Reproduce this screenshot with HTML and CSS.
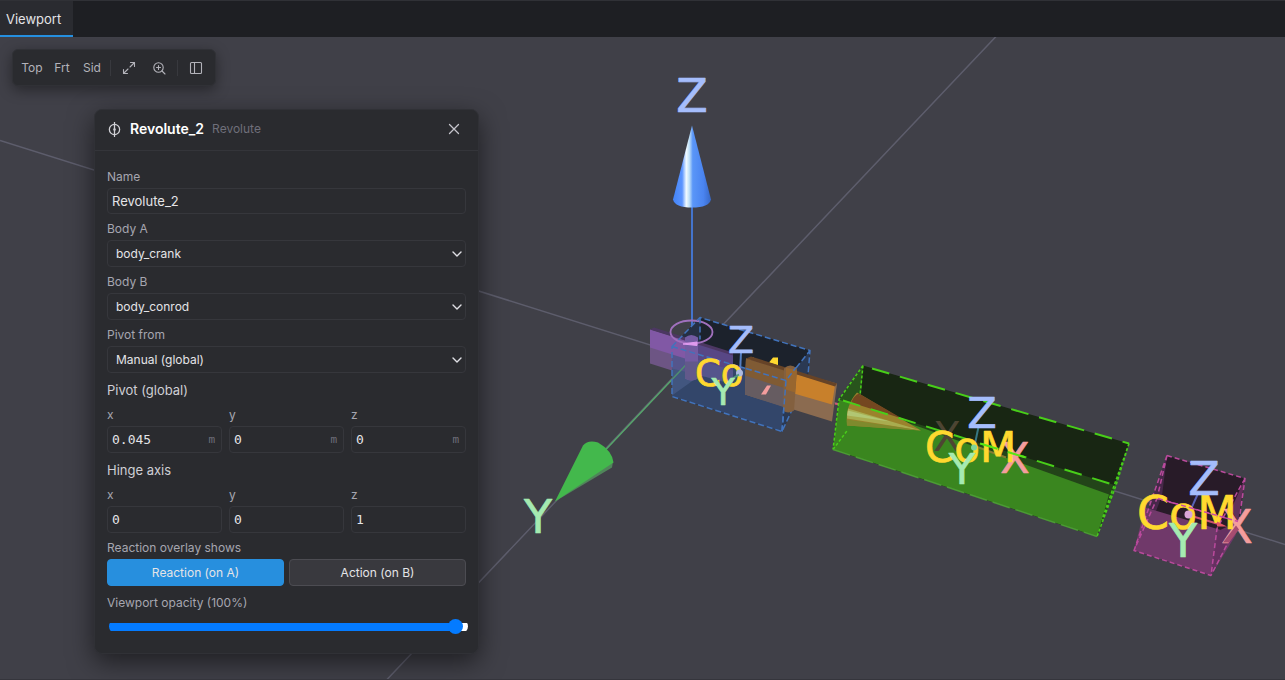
FILE: index.html
```html
<!DOCTYPE html>
<html lang="en">
<head>
<meta charset="utf-8">
<title>Viewport</title>
<link rel="stylesheet" href="styles.css">
</head>
<body>
<nav class="tabs"><button class="tab" type="button">Viewport</button></nav>
<main class="viewport">
  <svg class="scene" viewBox="0 37 1285 643" preserveAspectRatio="xMidYMid slice" role="img" aria-label="3D scene">
    <defs>
      <linearGradient id="coneBlue" x1="0" x2="1" y1="0" y2="0">
        <stop offset="0" stop-color="#4384f8"/><stop offset=".24" stop-color="#5a94ff"/><stop offset=".35" stop-color="#f2fbff"/><stop offset=".43" stop-color="#bfe0f8"/><stop offset=".52" stop-color="#5a96f8"/><stop offset=".8" stop-color="#4a84f0"/><stop offset="1" stop-color="#3767c4"/>
      </linearGradient>
    </defs>
    <!-- ground axes -->
    <g class="grid"><path d="M0 141L1285 545M996 37L387 680"/></g>
    <path d="M692 352V205" stroke="#4474cc" stroke-width="2"/>
    <path d="M691 360L604 452" stroke="#56a56b" stroke-width="1.500"/>
    <path d="M692 126L711 200Q709 208 692 208Q675 208 673 200Z" fill="url(#coneBlue)"/>
    <path d="M555 502L612 468L613 462L600 458Z" fill="#50855a"/>
    <path d="M555 502L583 446Q588 440 598 443Q612 451 613.500 463Z" fill="#43b84c"/>

    <!-- crank -->
    <path d="M700 318L810 351L808 376L782 432L672 397V347Z" fill="#1c222c"/>
    <path d="M672 347L700 318V354Z" fill="#253044"/>
    <path d="M786 381L810 351L807 381L782 432Z" fill="#2b3953"/>
    <path d="M672 347L786 381L782 432L672 397Z" fill="#33466a"/>
    <path d="M672 350L733 368V385L700 376L672 396Z" fill="#42567f"/>
    <path d="M650 330L733 355V370L672 352V371L650 364Z" fill="#6d5584"/>
    <path d="M672 352L733 370V384L672 369Z" fill="#55558c"/>
    <path d="M650 330L685 341V359L650 348Z" fill="#8158a5"/>
    <path d="M697 344L733 355V371L697 360Z" fill="#584785"/>
    <path d="M650 330L654 328L733 353V356Z" fill="#4c3762"/>
    <path d="M691 360L672 380" stroke="#4f8f70" stroke-width="1.500"/>
    <path d="M685 338Q691 333 698 338V379Q691 383 685 379Z" fill="#735ba2"/>
    <path d="M685 362H698V379Q691 383 685 379Z" fill="#62598b"/>
    <ellipse cx="691.500" cy="332.500" rx="21" ry="11.500" fill="none" stroke="#a070bd" stroke-width="1.800"/>
    <path d="M683 344.500L697 342.500V346Z" fill="#df9aef" stroke="#df9aef"/>
    <g class="edge blue"><path d="M672 347L700 318L810 351L808 376L782 432L672 397ZM672 347L786 381L810 351M786 381L782 432M700 318V340"/></g>
    <path d="M741 353L740 373" stroke="#547ec2" stroke-width="2"/>
    <text class="com" x="695" y="386" font-size="37">Co</text>
    <path d="M747 360L754 358V361ZM769 363L773 358H778V366Z" fill="#ffd92f"/>
    <circle cx="739.500" cy="373.500" r="3.500" fill="#aebbe0"/>
    <path d="M731 380L739 375" stroke="#4f987f" stroke-width="2"/>

    <!-- connecting-rod joint -->
    <path d="M746 359L837 384L832 422L745 395Z" fill="#8b6b50"/>
    <path d="M746 359L785 371V408L745 395Z" fill="#665c61"/>
    <path d="M746 359L786 371V389L745 376Z" fill="#805b34"/>
    <path d="M794 374L835 386L832 405L794 394Z" fill="#c8802b"/>
    <path d="M746 359L751 357L837 384L835 387Z" fill="#664327"/>
    <path d="M784 369Q790 363 797 369L794 411Q788 415 783 411Z" fill="#83603f"/>
    <path d="M786 368L797 371L795 393L786 390Z" fill="#98662f"/>
    <path d="M761 395L767 386H771L766 395Z" fill="#f49d9d"/>
    <path d="M835 404L840 405" stroke="#d45778" stroke-width="2"/>
    <g class="edge blue"><path d="M746 369L786 381L796 368M786 381L782 432"/></g>

    <!-- conrod -->
    <path d="M863 366L1129 444L1097 537L833 450L839 400Z" fill="#182613"/>
    <path d="M839 400L863 366L860 412L833 450Z" fill="#28541c"/>
    <path d="M839 400L1116 486L1097 537L833 450Z" fill="#234419"/>
    <path d="M839 400L924 429L1109 495L1097 537L833 450Z" fill="#3a861f"/>
    <path d="M1116 486L1129 444L1097 537Z" fill="#276d20"/>
    <path d="M857 393L921 431L847 426Q845 406 857 393Z" fill="#9b822c"/>
    <path d="M859 394L902 419L851 403Q854 396 859 394Z" fill="#744720"/>
    <path d="M848 409L921 431L847 419Z" fill="#a8ac4f"/>
    <path d="M848 411L890 422L847 416Z" fill="#b1c673"/>
    <path d="M847 420L921 431L847 426Z" fill="#7f8a2d"/>
    <text class="axis" x="947" y="451" font-size="41" fill="#4d4533">X</text>
    <g class="edge lime"><path class="dots" d="M863 366L839 400L833 450M863 366L860 396M833 450L848 430M1129 444L1116 486L1097 537M1129 444L1102 520"/><path class="long" d="M872 369L1129 444M843 401L1116 486"/><path class="low" d="M833 450L1097 537"/></g>
    <path d="M974 449L979 425" stroke="#367883" stroke-width="2"/>
    <path d="M976 447L1006 458" stroke="#837d32" stroke-width="2"/>
    <text class="axis x" x="1015" y="473" font-size="43">X</text>
    <text class="com" x="925" y="462" font-size="42">CoM</text>
    <path d="M980 444L1029 459" stroke="#57e315" stroke-width="2" stroke-dasharray="18 11"/>
    <circle cx="974" cy="448" r="3" fill="#80d59b"/>

    <!-- slider block -->
    <path d="M1167 456L1245 479L1239 522L1211 576L1134 551L1157 499Z" fill="#281b28"/>
    <path d="M1167 456L1134 551L1152 522L1162 496Z" fill="#47284a"/>
    <path d="M1145 508L1236 535L1211 576L1134 551Z" fill="#70396a"/>
    <path d="M1238 522L1245 479L1231 510Z" fill="#60305a"/>
    <path d="M1217 532L1238 522L1211 576Z" fill="#653060"/>
    <g class="edge pink"><path d="M1167 456L1245 479L1239 522L1211 576L1134 551L1157 499L1238 522M1167 456L1134 551M1167 456L1157 499M1245 479L1217 529L1211 576"/></g>
    <path d="M1189 514L1198 494" stroke="#5860b4" stroke-width="2"/>
    <path d="M1190 516L1220 525" stroke="#ce506f" stroke-width="2"/>
    <text class="axis x" x="1237" y="543" font-size="46">X</text>
    <path d="M1223 543L1236 526L1239 530L1229 543Z" fill="#a64c70"/>
    <text class="com" x="1137" y="529" font-size="46">CoM</text>
    <path d="M1217 522L1227 527L1217 527Z" fill="#e35865"/>
    <path d="M1158 499L1238 522" stroke="#ca49a6" stroke-width="1.500" stroke-dasharray="5 3"/>
    <circle cx="1188.500" cy="515" r="4" fill="#d9a5d8"/>
    <g class="axis z">
      <text x="692" y="112" font-size="46">Z</text><text x="741" y="353" font-size="38">Z</text><text x="982" y="428" font-size="43">Z</text><text x="1204" y="495" font-size="46">Z</text>
    </g>
    <g class="axis y">
      <text x="538" y="533" font-size="46">Y</text><text x="723" y="405" font-size="38">Y</text><text x="962" y="484" font-size="43">Y</text><text x="1183" y="557" font-size="46">Y</text>
    </g>
  </svg>

  <div class="toolbar" role="toolbar" aria-label="View">
    <button type="button">Top</button><button type="button">Frt</button><button type="button">Sid</button>
    <span class="divider"></span>
    <button type="button" aria-label="Fit view"><svg viewBox="0 0 14 14"><path d="M8.500 1.500h4v4M12.500 1.500L8 6M5.500 12.500h-4v-4M1.500 12.500L6 8"/></svg></button>
    <button type="button" aria-label="Zoom in"><svg viewBox="0 0 14 14"><circle cx="6.500" cy="6.500" r="4.700"/><path d="M10 10l3 3M6.500 4.500v4M4.500 6.500h4"/></svg></button>
    <span class="divider"></span>
    <button type="button" aria-label="Toggle panel"><svg viewBox="0 0 14 14"><rect x="1.500" y="1.500" width="11" height="11" rx="1"/><path d="M5.500 1.500v11"/></svg></button>
  </div>

  <form class="panel">
    <header class="panel-head">
      <svg class="joint" viewBox="0 0 14 14"><circle cx="7" cy="7" r="4.800"/><path d="M7 .5v13"/><circle cx="7" cy="7" r=".6" class="pin"/></svg>
      <h1>Revolute_2</h1><span class="kind">Revolute</span>
      <button class="close" type="button" aria-label="Close"><svg viewBox="0 0 12 12"><path d="M1.500 1.500l9 9M10.500 1.500l-9 9"/></svg></button>
    </header>
    <div class="panel-body">
      <div class="field"><label for="name">Name</label><input id="name" class="box" type="text" value="Revolute_2"></div>
      <div class="field"><label for="ba">Body A</label><div class="pick"><select id="ba" class="box"><option>body_crank</option></select><svg viewBox="0 0 10 6"><path d="M1 1l4 4 4-4"/></svg></div></div>
      <div class="field"><label for="bb">Body B</label><div class="pick"><select id="bb" class="box"><option>body_conrod</option></select><svg viewBox="0 0 10 6"><path d="M1 1l4 4 4-4"/></svg></div></div>
      <div class="field"><label for="pf">Pivot from</label><div class="pick"><select id="pf" class="box"><option>Manual (global)</option></select><svg viewBox="0 0 10 6"><path d="M1 1l4 4 4-4"/></svg></div></div>
      <section class="vector"><h2>Pivot (global)</h2>
        <div class="xyz">
          <div class="field"><label for="px">x</label><div class="box num"><input id="px" type="text" value="0.045"><span>m</span></div></div>
          <div class="field"><label for="py">y</label><div class="box num"><input id="py" type="text" value="0"><span>m</span></div></div>
          <div class="field"><label for="pz">z</label><div class="box num"><input id="pz" type="text" value="0"><span>m</span></div></div>
        </div>
      </section>
      <section class="vector"><h2>Hinge axis</h2>
        <div class="xyz">
          <div class="field"><label for="hx">x</label><div class="box num"><input id="hx" type="text" value="0"></div></div>
          <div class="field"><label for="hy">y</label><div class="box num"><input id="hy" type="text" value="0"></div></div>
          <div class="field"><label for="hz">z</label><div class="box num"><input id="hz" type="text" value="1"></div></div>
        </div>
      </section>
      <div class="field" role="group" aria-labelledby="ro"><span class="label" id="ro">Reaction overlay shows</span>
        <div class="choices"><button class="on" type="button">Reaction (on A)</button><button type="button">Action (on B)</button></div>
      </div>
      <div class="field opacity"><label for="op">Viewport opacity (100%)</label><input id="op" type="range" min="0" max="101.5" step="any" value="100"></div>
    </div>
  </form>
</main>
</body>
</html>
```
FILE: styles.css
```css
* { box-sizing: border-box; }
body {
  margin: 0;
  min-height: 100vh;
  display: flex;
  flex-direction: column;
  background: #404048;
  color: #e4e4e7;
  font: 13px/16px Inter, "Liberation Sans", sans-serif;
}
button, input, select { font: inherit; color: inherit; margin: 0; }
button { border: 0; padding: 0; background: none; }
svg { display: block; fill: none; stroke-linecap: round; stroke-linejoin: round; }
.tabs { display: flex; background: #1e1f23; border-top: 1px solid #303136; }
.tab { height: 36px; padding: 1px 12px 0 6px; background: #2a2b30; border-bottom: 2px solid #258fdf; }
.viewport { position: relative; flex: 1; overflow: hidden; border-bottom: 1px solid #35353c; }
.scene { position: absolute; inset: 0; width: 100%; height: 100%; stroke-linecap: butt; }

.grid { stroke: #5d5d6c; stroke-width: 1.5; }
.edge { stroke-width: 1.5; }
.blue { stroke: #4173bc; stroke-dasharray: 6 3; }
.lime { stroke: #48ce19; stroke-width: 2; }
.lime .dots { stroke-dasharray: 3 2; stroke-width: 1.5; }
.lime .long { stroke-dasharray: 18 11; }
.lime .low { stroke: #4b9b34; stroke-dasharray: 18 6; stroke-width: 1.5; }
.pink { stroke: #b94a9c; stroke-dasharray: 5 3; }
.scene text { font-family: "DejaVu Sans", sans-serif; stroke-width: 0.7; }
.axis { text-anchor: middle; }
.com { fill: #ffd92f; stroke: #ffd92f; }
.x { fill: #f49d9d; stroke: #f49d9d; }
.y { fill: #a5eab1; stroke: #a5eab1; }
.z { fill: #a5bdfc; stroke: #a5bdfc; }

.toolbar {
  position: absolute;
  left: 12px;
  top: 12px;
  height: 37px;
  display: flex;
  align-items: center;
  padding: 0 4px;
  background: #2a2b2f;
  border: 1px solid #303136;
  border-radius: 6px;
  box-shadow: 0 4px 14px #0006;
  color: #b3b3ba;
  font-size: 12px;
}
.toolbar button { height: 28px; min-width: 30px; display: grid; place-items: center; }
.toolbar svg { width: 14px; height: 14px; stroke: currentColor; stroke-width: 1.1; }
.divider { width: 1px; height: 16px; margin: 0 3px; background: #38393e; }

.panel {
  position: absolute;
  left: 94px;
  top: 72px;
  width: 385px;
  background: #2a2b2f;
  border: 1px solid #303136;
  border-radius: 8px;
  box-shadow: 0 8px 26px #0008;
}
.panel-head { display: flex; align-items: center; height: 41px; padding: 0 17px 2px 12px; border-bottom: 1px solid #34353a; }
.joint { width: 15px; height: 15px; stroke: #d0d0d5; stroke-width: 1.2; }
.joint .pin { fill: #d0d0d5; }
h1 { margin: 0 8px; font-size: 14px; line-height: 18px; font-weight: 600; color: #fff; }
.kind { color: #6f6f7a; font-size: 12px; }
.close { margin-left: auto; padding: 1px; }
.close svg { width: 12px; height: 12px; stroke: #c5c5cc; stroke-width: 1.3; }
.panel-body { display: flex; flex-direction: column; gap: 8px; padding: 19px 12px; }
.field { display: flex; flex-direction: column; gap: 4px; min-width: 0; }
label, .label { font-size: 12px; line-height: 14px; color: #a6a6b0; }
.box { width: 100%; height: 27px; border: 1px solid #36373c; border-radius: 4px; background: #2a2b2f; padding: 0 4px; outline: none; }
#name { height: 26px; }
.pick { display: grid; align-items: center; }
.pick select { grid-area: 1 / 1; appearance: none; padding: 0 24px 0 8px; font-size: 12px; }
.pick svg { grid-area: 1 / 1; justify-self: end; margin-right: 4px; width: 10px; height: 6px; stroke: #e0e0e5; stroke-width: 1.4; pointer-events: none; }
.vector { display: flex; flex-direction: column; gap: 9px; }
h2 { margin: 0; font-size: 13px; line-height: 18px; font-weight: 400; color: #cfcfd5; }
.xyz { display: grid; grid-template-columns: repeat(3, 1fr); gap: 7px; }
.num { display: flex; align-items: center; padding-right: 6px; font-family: "DejaVu Sans Mono", monospace; }
.num input { flex: 1; min-width: 0; width: 0; padding: 0; border: 0; background: none; outline: none; }
.num span { font-size: 11px; color: #6f6f7a; }
.choices { display: grid; grid-template-columns: 1fr 1fr; gap: 5px; }
.choices button { height: 27px; border: 1px solid #4c4c52; border-radius: 4px; background: #39393e; font-size: 12px; }
.choices .on { background: #278fde; border-color: #278fde; }
.opacity { gap: 9px; padding-top: 2px; }
.opacity input {
  appearance: none;
  align-self: stretch;
  height: 15px;
  margin: 0 -2px 0 2px;
  background: linear-gradient(90deg, #047bff 97%, #fff 97%) center / 100% 8px no-repeat;
  border-radius: 8px;
}
.opacity input::-webkit-slider-runnable-track { height: 15px; }
.opacity input::-webkit-slider-thumb { appearance: none; width: 15px; height: 15px; border-radius: 50%; background: #047bff; }
```
